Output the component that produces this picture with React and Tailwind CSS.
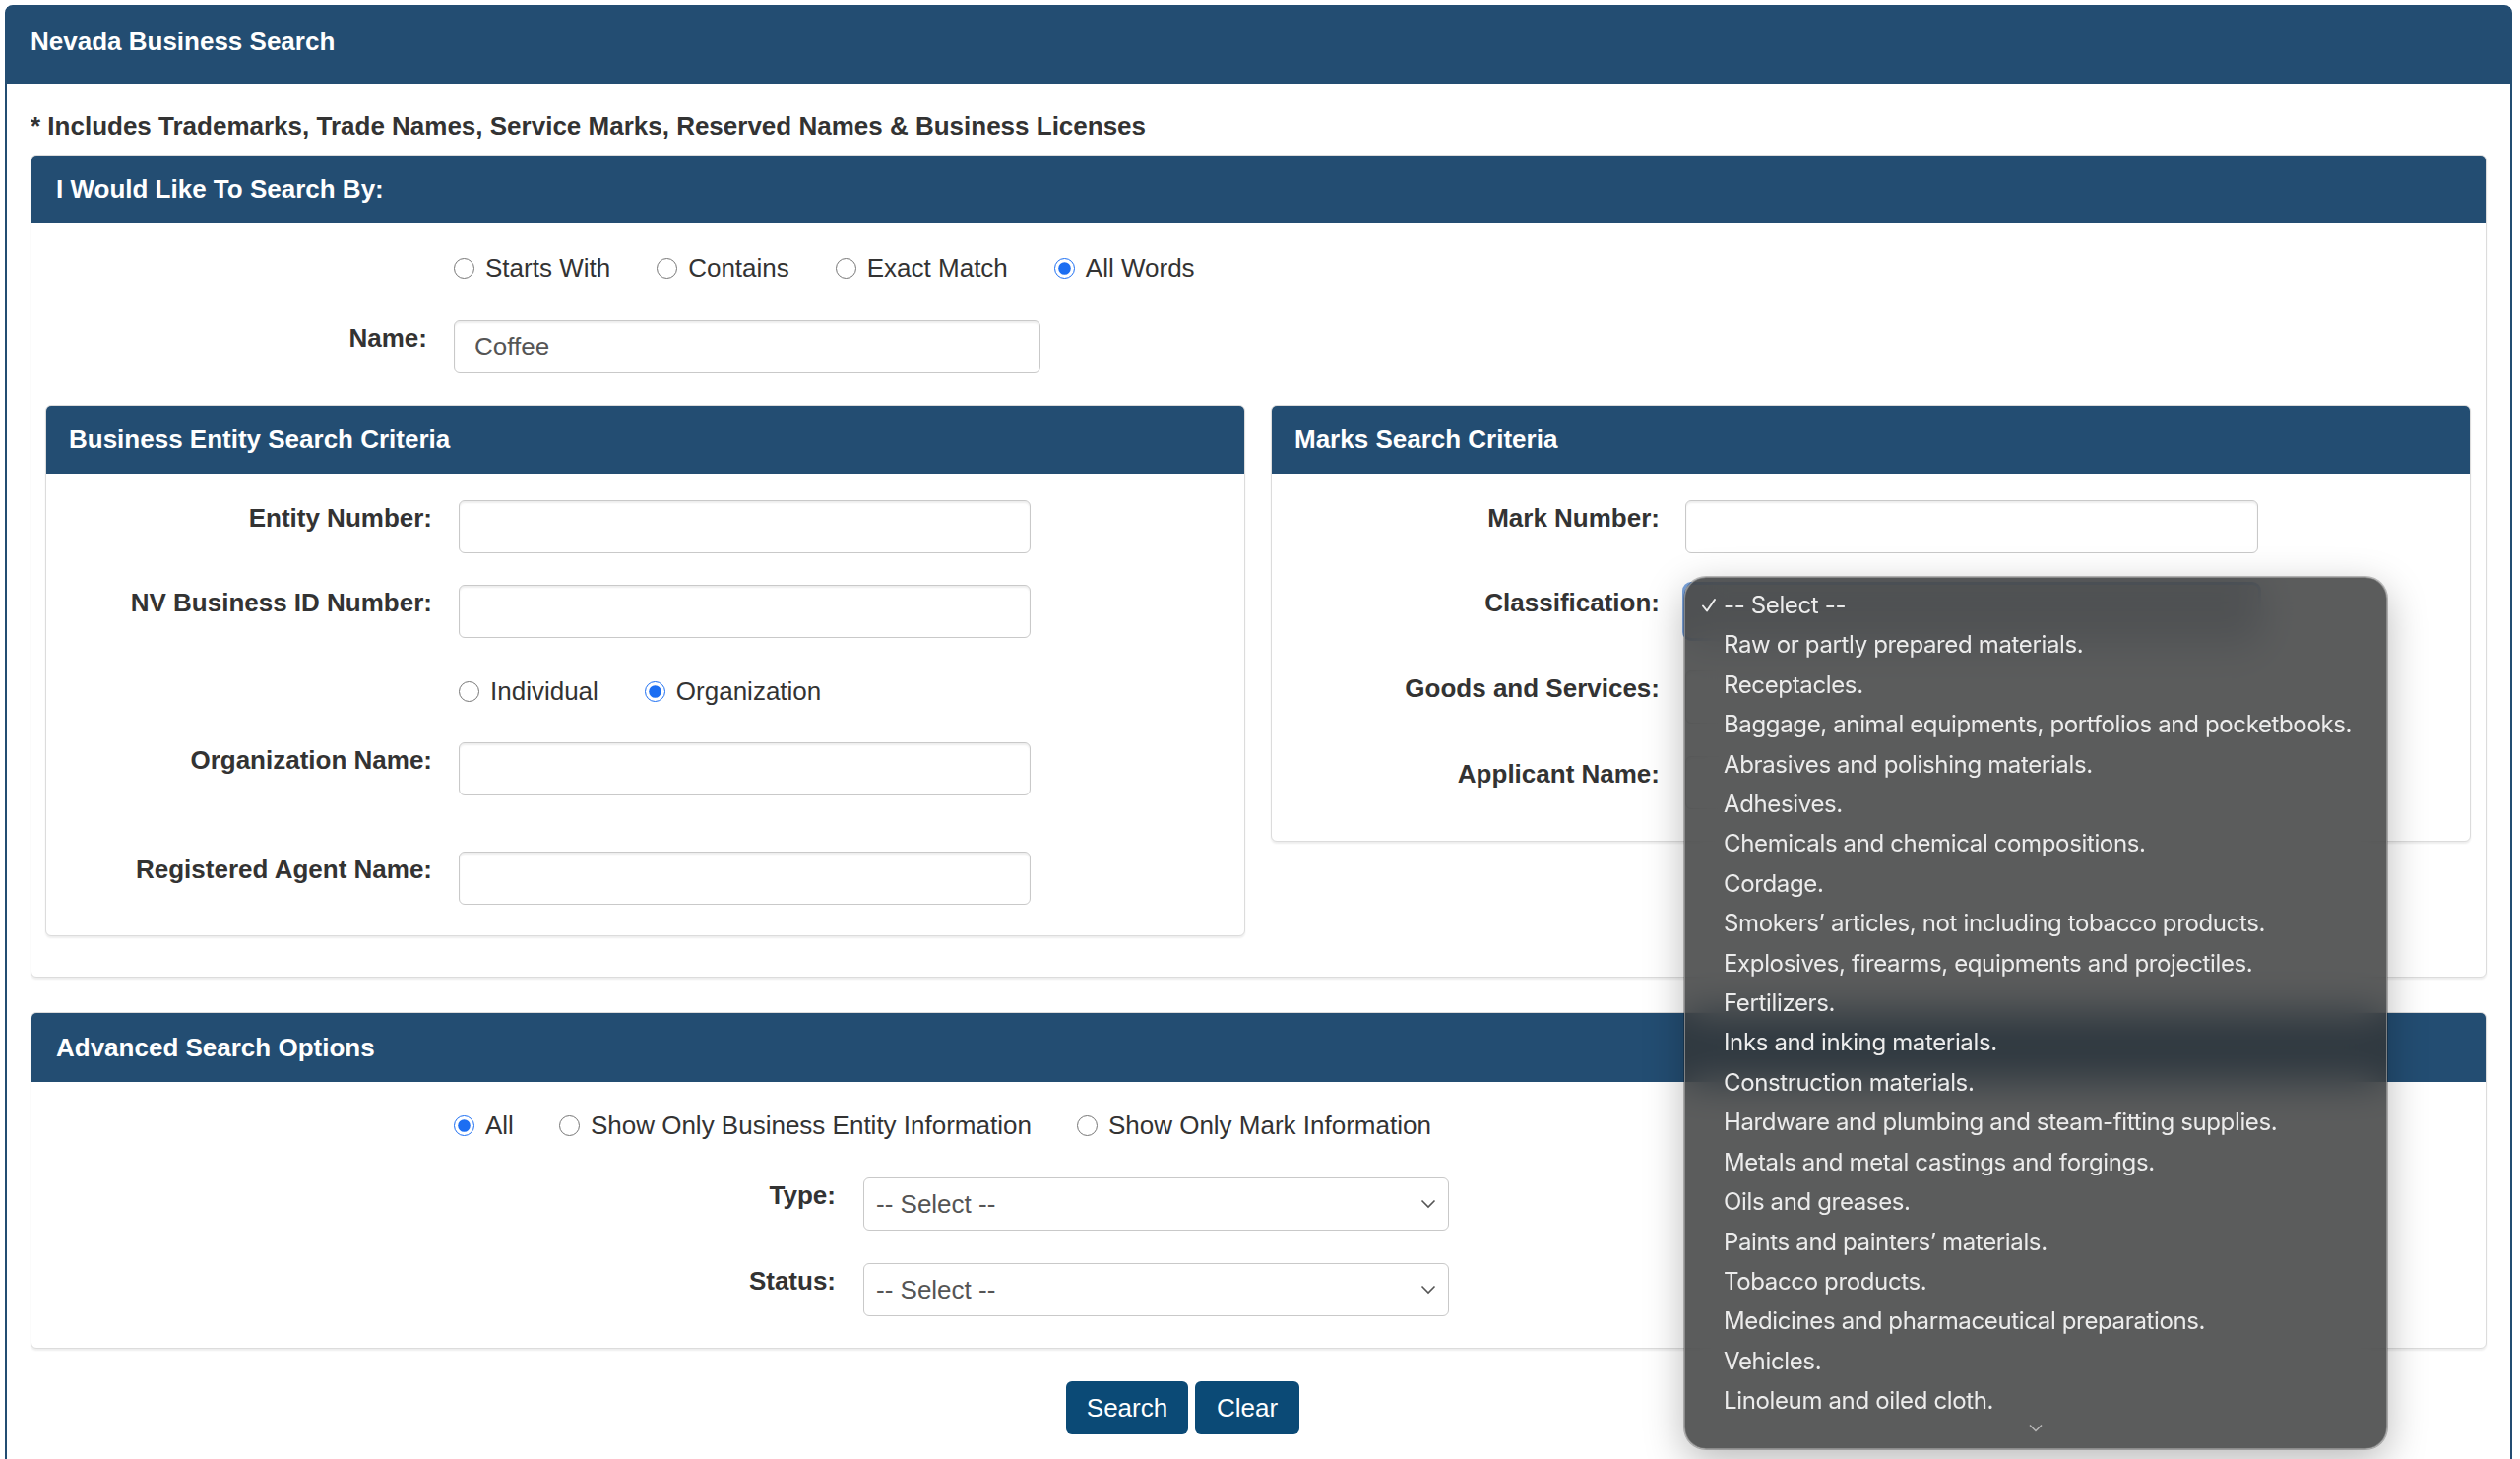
import React from 'react';

const classes = [
  'Raw or partly prepared materials.',
  'Receptacles.',
  'Baggage, animal equipments, portfolios and pocketbooks.',
  'Abrasives and polishing materials.',
  'Adhesives.',
  'Chemicals and chemical compositions.',
  'Cordage.',
  'Smokers’ articles, not including tobacco products.',
  'Explosives, firearms, equipments and projectiles.',
  'Fertilizers.',
  'Inks and inking materials.',
  'Construction materials.',
  'Hardware and plumbing and steam-fitting supplies.',
  'Metals and metal castings and forgings.',
  'Oils and greases.',
  'Paints and painters’ materials.',
  'Tobacco products.',
  'Medicines and pharmaceutical preparations.',
  'Vehicles.',
  'Linoleum and oiled cloth.',
];

const Radio = ({ name, label, checked }) => (
  <label className="flex items-center gap-[11px]">
    <input type="radio" name={name} defaultChecked={checked} className="m-0 h-[21px] w-[21px] accent-[#1c6ef2]" />
    <span>{label}</span>
  </label>
);

const TextBox = ({ value = '', width }) => (
  <input
    type="text"
    defaultValue={value}
    className={`h-[54px] ${width} rounded-[6px] border-[1.5px] border-[#c9c9c9] bg-white px-[20px] text-[26px] text-[#555] shadow-[inset_0_2px_2px_rgba(0,0,0,0.07)] outline-none`}
  />
);

const SelectBox = () => (
  <div className="flex h-[54px] w-[595px] items-center justify-between rounded-[6px] border-[1.5px] border-[#c9c9c9] bg-white pl-[12px] pr-[12px] text-[#555]">
    <span>-- Select --</span>
    <svg width="16" height="10" viewBox="0 0 16 10" fill="none">
      <path d="M1.5 1.5l6.5 6.5 6.5-6.5" stroke="#555" strokeWidth="1.6" />
    </svg>
  </div>
);

const Field = ({ label, labelClass, gapClass, className = '', children }) => (
  <div className={`flex items-start ${gapClass} ${className}`}>
    <div className={`${labelClass} shrink-0 text-right font-bold`}>{label}</div>
    {children}
  </div>
);

const Panel = ({ title, className = '', titleClass = 'px-[25px]', children }) => (
  <div className={`rounded-[6px] border border-[#dcdcdc] bg-white shadow-[0_2px_2px_rgba(0,0,0,0.07)] ${className}`}>
    <div className={`flex h-[69px] items-center rounded-t-[5px] bg-[#234d72] font-bold text-white ${titleClass}`}>{title}</div>
    {children}
  </div>
);

const ClassMenu = () => (
  <div className="absolute left-[-1px] top-[-8px] z-50 h-[886px] w-[714px] overflow-hidden whitespace-nowrap rounded-[22px] border border-[#a0a0a0]/70 bg-[rgba(50,51,51,0.8)] pt-[8px] font-['Inter',sans-serif] text-[24px] leading-[40.4px] tracking-[-0.015em] text-[#ececec] shadow-[0_0_0_1px_rgba(0,0,0,0.25),0_12px_40px_rgba(0,0,0,0.28)] backdrop-blur-[20px]">
    <div className="relative pl-[39px]">
      <svg className="absolute left-[16px] top-[12px]" width="16" height="16" viewBox="0 0 16 16" fill="none">
        <path d="M2 8.5l4 5L14 2" stroke="#ececec" strokeWidth="2" strokeLinecap="round" strokeLinejoin="round" />
      </svg>
      -- Select --
    </div>
    {classes.map((c) => (
      <div key={c} className="pl-[39px]">{c}</div>
    ))}
    <svg className="absolute bottom-[16px] left-[349px]" width="14" height="9" viewBox="0 0 14 9" fill="none">
      <path d="M1 1.5l6 6 6-6" stroke="#b8b8b8" strokeWidth="1.5" />
    </svg>
  </div>
);

export default function App() {
  return (
    <div className="min-h-screen bg-white font-['Liberation_Sans',Arial,sans-serif] text-[26px] leading-[37px] text-[#333]">
      <div className="ml-[5px] mr-[8px] mt-[5px] rounded-t-[8px] border-2 border-[#234d72] pb-[80px]">
        <div className="flex h-[78px] items-center bg-[#234d72] pb-[8px] pl-[24px] font-bold text-white">
          Nevada Business Search
        </div>

        <div className="px-[24px]">
          <p className="mt-[25px] font-bold">
            * Includes Trademarks, Trade Names, Service Marks, Reserved Names &amp; Business Licenses
          </p>

          {/* search by */}
          <Panel title="I Would Like To Search By:" className="mt-[10px]">
            <div className="pb-[41px] pt-[27px]">
              <div className="flex gap-[47px] pl-[429px]">
                <Radio name="mode" label="Starts With" />
                <Radio name="mode" label="Contains" />
                <Radio name="mode" label="Exact Match" />
                <Radio name="mode" label="All Words" checked />
              </div>
              <Field label="Name:" labelClass="w-[402px]" gapClass="gap-[27px]" className="mt-[34px]">
                <TextBox value="Coffee" width="w-[596px]" />
              </Field>

              <div className="mt-[32px] grid grid-cols-2 items-start gap-[26px] pl-[14px] pr-[15px]">
                <Panel title="Business Entity Search Criteria" titleClass="px-[23px]">
                  <div className="pb-[31px] pt-[27px]">
                    <Field label="Entity Number:" labelClass="w-[392px]" gapClass="gap-[27px]">
                      <TextBox width="w-[581px]" />
                    </Field>
                    <Field label="NV Business ID Number:" labelClass="w-[392px]" gapClass="gap-[27px]" className="mt-[32px]">
                      <TextBox width="w-[581px]" />
                    </Field>
                    <div className="mt-[36px] flex gap-[47px] pl-[419px]">
                      <Radio name="kind" label="Individual" />
                      <Radio name="kind" label="Organization" checked />
                    </div>
                    <Field label="Organization Name:" labelClass="w-[392px]" gapClass="gap-[27px]" className="mt-[33px]">
                      <TextBox width="w-[581px]" />
                    </Field>
                    <Field label="Registered Agent Name:" labelClass="w-[392px]" gapClass="gap-[27px]" className="mt-[57px]">
                      <TextBox width="w-[581px]" />
                    </Field>
                  </div>
                </Panel>

                <Panel title="Marks Search Criteria" titleClass="px-[23px]">
                  <div className="pb-[32px] pt-[27px]">
                    <Field label="Mark Number:" labelClass="w-[394px]" gapClass="gap-[26px]">
                      <TextBox width="w-[582px]" />
                    </Field>
                    <Field label="Classification:" labelClass="w-[394px]" gapClass="gap-[26px]" className="mt-[32px]">
                      <div className="relative">
                        <div className="h-[54px] w-[582px] rounded-[6px] bg-[#c2c6cc] ring-[3px] ring-[#7aa3dc]" />
                        <ClassMenu />
                      </div>
                    </Field>
                    <Field label="Goods and Services:" labelClass="w-[394px]" gapClass="gap-[26px]" className="mt-[33px]">
                      <TextBox width="w-[582px]" />
                    </Field>
                    <Field label="Applicant Name:" labelClass="w-[394px]" gapClass="gap-[26px]" className="mt-[33px]">
                      <TextBox width="w-[582px]" />
                    </Field>
                  </div>
                </Panel>
              </div>
            </div>
          </Panel>

          {/* advanced */}
          <Panel title="Advanced Search Options" className="mt-[35px]" titleClass="h-[70px] px-[25px]">
            <div className="pb-[32px] pt-[26px]">
              <div className="flex gap-[46px] pl-[429px]">
                <Radio name="show" label="All" checked />
                <Radio name="show" label="Show Only Business Entity Information" />
                <Radio name="show" label="Show Only Mark Information" />
              </div>
              <Field label="Type:" labelClass="w-[817px]" gapClass="gap-[28px]" className="mt-[34px]">
                <SelectBox />
              </Field>
              <Field label="Status:" labelClass="w-[817px]" gapClass="gap-[28px]" className="mt-[33px]">
                <SelectBox />
              </Field>
            </div>
          </Panel>

          <div className="mt-[33px] flex gap-[7px] pl-[1052px]">
            <button className="h-[54px] w-[124px] rounded-[6px] bg-[#0b4a76] text-white">Search</button>
            <button className="h-[54px] w-[106px] rounded-[6px] bg-[#0b4a76] text-white">Clear</button>
          </div>
        </div>
      </div>
    </div>
  );
}
